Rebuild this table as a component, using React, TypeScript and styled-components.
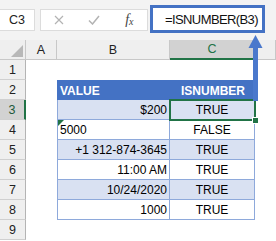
import React from "react";
import styled, { createGlobalStyle } from "styled-components";

const Global = createGlobalStyle`
  html, body { margin: 0; padding: 0; background: #fff; }
  body { width: 276px; height: 241px; overflow: hidden; font-family: "Liberation Sans", Arial, sans-serif; }
`;

const Page = styled.div`
  position: relative;
  width: 276px;
  height: 241px;
  background: #fff;
  overflow: hidden;
`;

const TopBar = styled.div`
  height: 40px;
  background: #f3f3f3;
  display: flex;
  align-items: flex-start;
  box-sizing: border-box;
  padding-top: 9px;
`;

const NameBox = styled.div`
  width: 35px;
  height: 22px;
  box-sizing: border-box;
  background: #fff;
  border: 1px solid #dcdcdc;
  border-left: none;
  display: flex;
  align-items: center;
  justify-content: center;
  font-size: 12.5px;
  color: #222;
`;

const ButtonBox = styled.div`
  margin-left: 5px;
  width: 108px;
  height: 22px;
  box-sizing: border-box;
  background: #fff;
  border: 1px solid #dcdcdc;
  display: flex;
  align-items: center;
`;

const BarButton = styled.div`
  width: 36px;
  height: 20px;
  display: flex;
  align-items: center;
  justify-content: center;
`;

const Fx = styled.span`
  font-family: "Liberation Serif", "Times New Roman", serif;
  font-style: italic;
  font-size: 14px;
  color: #444;
  sub {
    font-size: 10px;
    vertical-align: -1px;
  }
`;

const FormulaBox = styled.div`
  margin-left: 2px;
  margin-top: -4px;
  width: 115px;
  height: 28px;
  box-sizing: border-box;
  border: 3px solid #4472c4;
  background: #fff;
  display: flex;
  align-items: center;
  padding-left: 12px;
  font-size: 13px;
  letter-spacing: -0.6px;
  color: #111;
`;

const Sheet = styled.div`
  display: grid;
  grid-template-columns: 26px 31px 113px 85px 1fr;
  grid-auto-rows: 20px;
`;

const Corner = styled.div`
  background: #efefef;
  border-right: 1px solid #c8c8c8;
  border-bottom: 1px solid #c8c8c8;
  box-sizing: border-box;
  display: flex;
  align-items: flex-end;
  justify-content: flex-end;
  padding: 0 2px 2px 0;
`;

const ColHead = styled.div<{ $sel?: boolean }>`
  box-sizing: border-box;
  background: ${(p) => (p.$sel ? "#d2d2d2" : "#efefef")};
  border-right: 1px solid #c8c8c8;
  border-bottom: ${(p) => (p.$sel ? "2px solid #217346" : "1px solid #c8c8c8")};
  display: flex;
  align-items: center;
  justify-content: center;
  font-size: 12.5px;
  color: ${(p) => (p.$sel ? "#217346" : "#222")};
`;

const RowHead = styled.div<{ $sel?: boolean }>`
  box-sizing: border-box;
  background: ${(p) => (p.$sel ? "#d2d2d2" : "#efefef")};
  border-right: ${(p) => (p.$sel ? "2px solid #217346" : "1px solid #b4b4b4")};
  border-bottom: 1px solid #d0d0d0;
  display: flex;
  align-items: center;
  justify-content: center;
  padding-top: 1px;
  font-size: 12.5px;
  color: ${(p) => (p.$sel ? "#1e5a3a" : "#222")};
`;

const Blank = styled.div`
  background: #fff;
`;

const HeadCell = styled.div<{ $center?: boolean }>`
  box-sizing: border-box;
  background: #4472c4;
  color: #fff;
  font-weight: bold;
  font-size: 12px;
  display: flex;
  align-items: center;
  padding: 1px 2px 0 3px;
  justify-content: ${(p) => (p.$center ? "center" : "flex-start")};
`;

const DataCell = styled.div<{
  $band: boolean;
  $align: "left" | "right" | "center";
  $first?: boolean;
  $flag?: boolean;
  $sel?: boolean;
}>`
  position: relative;
  box-sizing: border-box;
  background: ${(p) => (p.$band ? "#d9e1f2" : "#fff")};
  border-right: 1px solid #8ea9db;
  border-bottom: 1px solid #8ea9db;
  border-left: ${(p) => (p.$first ? "1px solid #8ea9db" : "none")};
  display: flex;
  align-items: center;
  justify-content: ${(p) =>
    p.$align === "left" ? "flex-start" : p.$align === "right" ? "flex-end" : "center"};
  padding: 1px 2px 0 2px;
  font-size: 12px;
  color: #000;
  z-index: ${(p) => (p.$sel ? 2 : "auto")};

  ${(p) =>
    p.$flag &&
    `
    &::before {
      content: "";
      position: absolute;
      left: 0;
      top: 0;
      border-top: 6px solid #217346;
      border-right: 6px solid transparent;
    }
  `}

  ${(p) =>
    p.$sel &&
    `
    &::after {
      content: "";
      position: absolute;
      left: -1px;
      top: -1px;
      right: -2px;
      bottom: -2px;
      border: 2px solid #217346;
      pointer-events: none;
    }
  `}
`;

const FillHandle = styled.span`
  position: absolute;
  left: 82px;
  top: 17px;
  width: 5px;
  height: 5px;
  background: #217346;
  border: 1px solid #fff;
  z-index: 3;
`;

const Arrow = styled.svg`
  position: absolute;
  left: 247px;
  top: 33px;
  z-index: 5;
`;

const rows: { v: string; align: "left" | "right"; r: string; flag?: boolean }[] = [
  { v: "$200", align: "right", r: "TRUE" },
  { v: "5000", align: "left", r: "FALSE", flag: true },
  { v: "+1 312-874-3645", align: "right", r: "TRUE" },
  { v: "11:00 AM", align: "right", r: "TRUE" },
  { v: "10/24/2020", align: "right", r: "TRUE" },
  { v: "1000", align: "right", r: "TRUE" },
];

export default function App() {
  return (
    <Page>
      <Global />
      <TopBar>
        <NameBox>C3</NameBox>
        <ButtonBox>
          <BarButton>
            <svg width="10" height="10" viewBox="0 0 10 10">
              <path d="M1 1L9 9M9 1L1 9" stroke="#b3b3b3" strokeWidth="1.2" fill="none" />
            </svg>
          </BarButton>
          <BarButton>
            <svg width="12" height="10" viewBox="0 0 12 10">
              <path d="M1 5.5L4.5 9L11 1" stroke="#b3b3b3" strokeWidth="1.5" fill="none" />
            </svg>
          </BarButton>
          <BarButton>
            <Fx>
              f<sub>x</sub>
            </Fx>
          </BarButton>
        </ButtonBox>
        <FormulaBox>=ISNUMBER(B3)</FormulaBox>
      </TopBar>
      <Sheet>
        <Corner>
          <svg width="12" height="12" viewBox="0 0 12 12">
            <path d="M12 0L12 12L0 12Z" fill="#b8b8b8" />
          </svg>
        </Corner>
        <ColHead>A</ColHead>
        <ColHead>B</ColHead>
        <ColHead $sel>C</ColHead>
        <ColHead />

        <RowHead>1</RowHead>
        <Blank />
        <Blank />
        <Blank />
        <Blank />

        <RowHead>2</RowHead>
        <Blank />
        <HeadCell>VALUE</HeadCell>
        <HeadCell $center>ISNUMBER</HeadCell>
        <Blank />

        {rows.map((row, i) => (
          <React.Fragment key={i}>
            <RowHead $sel={i === 0}>{i + 3}</RowHead>
            <Blank />
            <DataCell $band={i % 2 === 0} $align={row.align} $first $flag={row.flag}>
              {row.v}
            </DataCell>
            <DataCell $band={i % 2 === 0} $align="center" $sel={i === 0}>
              {row.r}
              {i === 0 && <FillHandle />}
            </DataCell>
            <Blank />
          </React.Fragment>
        ))}

        <RowHead>9</RowHead>
        <Blank />
        <Blank />
        <Blank />
        <Blank />
      </Sheet>
      <Arrow width="18" height="70" viewBox="0 0 18 70">
        <path d="M8.5 2L1.5 15L15.5 15Z" fill="#4a78cc" />
        <rect x="6" y="14" width="5" height="54" fill="#4a78cc" />
      </Arrow>
    </Page>
  );
}
